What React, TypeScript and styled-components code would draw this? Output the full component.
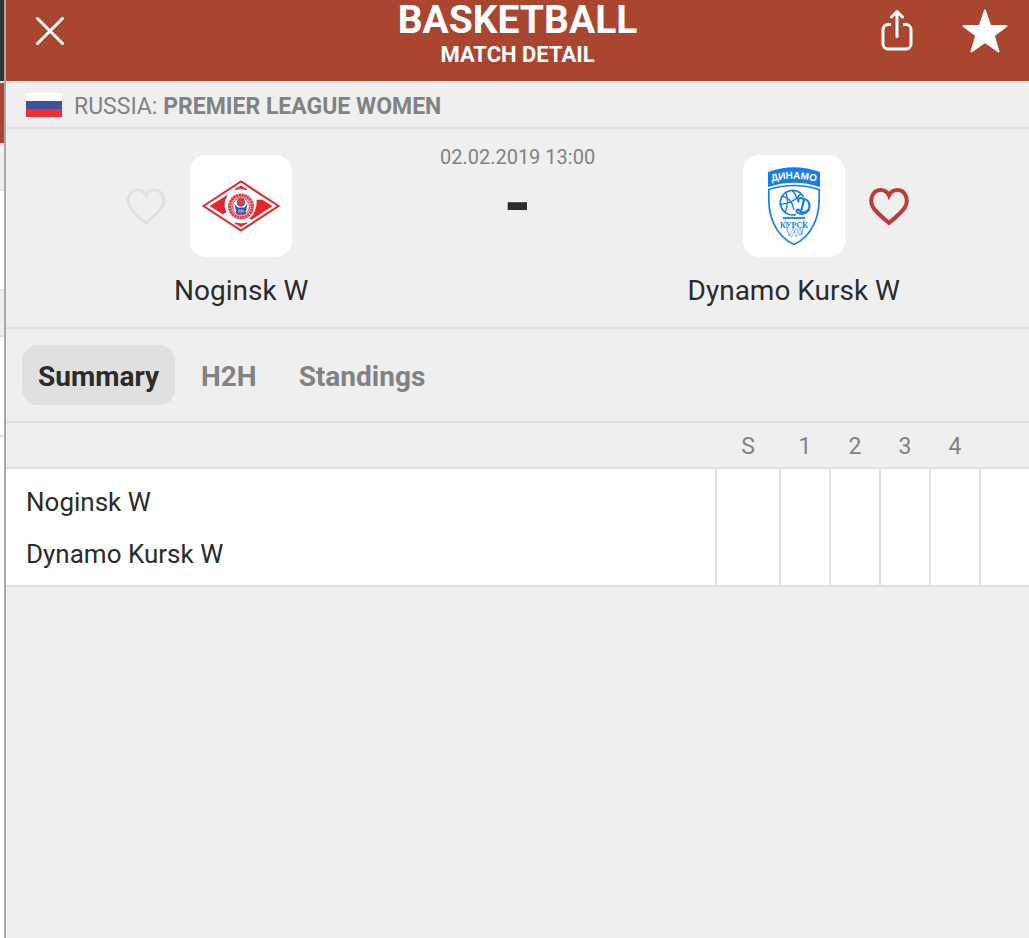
import React from "react";
import styled, { createGlobalStyle } from "styled-components";

const line = "#e0e0e0";
const surface = "#efefef";
const brand = "#aa4630";
const ink = "#2b2b2b";
const muted = "#828282";

const GlobalStyle = createGlobalStyle`
  * { box-sizing: border-box; }
  body {
    margin: 0;
    background: ${surface};
    color: ${ink};
    font-family: Roboto, "Liberation Sans", sans-serif;
  }
`;

const Screen = styled.div`
  display: flex;
  min-height: 100vh;
`;

const Backdrop = styled.div`
  width: 4px;
  flex: none;
  display: flex;
  flex-direction: column;
  background: #fff;
`;

const Strip = styled.div<{ $h: number; $bg: string }>`
  height: ${(p) => p.$h}px;
  background: ${(p) => p.$bg};
  border-bottom: 2px solid ${line};
`;

const Panel = styled.main`
  flex: 1;
  min-width: 0;
  border-left: 2px solid #a9a9a9;
  background: ${surface};
`;

const Header = styled.header`
  display: grid;
  grid-template-columns: 1fr auto 1fr;
  height: 83px;
  background: ${brand};
  border-bottom: 2px solid #f1dfdb;
  color: #fff;
`;

const Actions = styled.div<{ $end?: boolean }>`
  display: flex;
  justify-content: ${(p) => (p.$end ? "flex-end" : "flex-start")};
  align-items: flex-start;
  gap: 44px;
  padding: 8px 20px 0;
`;

const IconButton = styled.button`
  display: flex;
  padding: 0;
  border: 0;
  background: none;
  color: inherit;
  cursor: pointer;
`;

const Titles = styled.div`
  text-align: center;
`;

const Title = styled.h1`
  margin: 0;
  font-size: 39px;
  line-height: 40px;
  font-weight: 700;
`;

const Subtitle = styled.p`
  margin: 0;
  font-size: 22px;
  line-height: 30px;
  font-weight: 700;
`;

const League = styled.div`
  display: flex;
  align-items: center;
  gap: 12px;
  height: 46px;
  padding: 0 20px;
  border-bottom: 2px solid ${line};
  color: ${muted};
  font-size: 23px;
  line-height: 28px;
`;

const LeagueName = styled.span`
  padding-top: 4px;
`;

const Match = styled.section`
  display: grid;
  grid-template-columns: 1fr 154px 1fr;
  height: 200px;
  padding: 26px 36px 0;
  border-bottom: 2px solid ${line};
`;

const Team = styled.div`
  display: flex;
  flex-direction: column;
  align-items: center;
  gap: 16px;
`;

const CrestRow = styled.div<{ $mirrored?: boolean }>`
  display: flex;
  flex-direction: ${(p) => (p.$mirrored ? "row-reverse" : "row")};
  align-items: center;
  gap: 24px;
  &::after {
    content: "";
    width: 40px;
  }
`;

const Crest = styled.div`
  width: 102px;
  height: 102px;
  border-radius: 16px;
  background: #fff;
`;

const TeamName = styled.h2`
  margin: 0;
  font-size: 28px;
  line-height: 36px;
  font-weight: 400;
  white-space: nowrap;
`;

const Kickoff = styled.div`
  display: flex;
  flex-direction: column;
  align-items: center;
  margin-top: -12px;
`;

const KickoffTime = styled.time`
  color: ${muted};
  font-size: 20px;
  line-height: 28px;
  white-space: nowrap;
`;

const Score = styled.strong`
  font-size: 70px;
  line-height: 66px;
`;

const Tabs = styled.nav`
  display: flex;
  align-items: flex-start;
  gap: 10px;
  height: 94px;
  padding: 16px;
  border-bottom: 2px solid ${line};
`;

const Tab = styled.button<{ $active?: boolean }>`
  height: 60px;
  padding: 4px 16px 0;
  border: 0;
  border-radius: 16px;
  background: ${(p) => (p.$active ? line : "transparent")};
  color: ${(p) => (p.$active ? ink : muted)};
  font-family: inherit;
  font-size: 28px;
  line-height: 34px;
  font-weight: 700;
  cursor: pointer;
`;

const ScoreTable = styled.table`
  width: 100%;
  table-layout: fixed;
  border-collapse: separate;
  border-spacing: 0;
  border-bottom: 2px solid ${line};
`;

const PeriodHead = styled.th<{ $w?: number }>`
  width: ${(p) => (p.$w ? `${p.$w}px` : "auto")};
  height: 46px;
  padding: 4px 0 0 2px;
  border-bottom: 2px solid ${line};
  color: ${muted};
  font-size: 23px;
  line-height: 28px;
  font-weight: 400;
`;

const ScoreRow = styled.tr`
  background: #fff;
`;

const RowName = styled.th`
  padding: 0 20px;
  font-size: 26px;
  line-height: 52px;
  font-weight: 400;
  text-align: left;
  ${ScoreRow}:first-child & { padding-top: 7px; }
  ${ScoreRow}:last-child & { padding-bottom: 5px; }
`;

const ScoreCell = styled.td`
  padding: 0;
  border-left: 2px solid ${line};
`;

const periods = [
  { label: "S", width: 64 },
  { label: "1", width: 50 },
  { label: "2", width: 50 },
  { label: "3", width: 50 },
  { label: "4", width: 50 },
  { label: "", width: 50 },
];

const CloseIcon = () => (
  <svg width="48" height="46" viewBox="0 0 48 46" fill="none" stroke="currentColor" strokeWidth="3" strokeLinecap="round" aria-hidden="true">
    <path d="M11.500 10.500L36.500 35.500M36.500 10.500L11.500 35.500" />
  </svg>
);

const ShareIcon = () => (
  <svg width="40" height="46" viewBox="0 0 40 46" fill="none" stroke="currentColor" strokeWidth="3" strokeLinecap="round" strokeLinejoin="round" aria-hidden="true">
    <path strokeLinecap="butt" d="M14 16.500H11a5 5 0 0 0-5 5V36a5 5 0 0 0 5 5h18a5 5 0 0 0 5-5V21.500a5 5 0 0 0-5-5h-3" />
    <path d="M20 28.500V4M14.500 9l5.500-5.500 5.500 5.500" />
  </svg>
);

const StarIcon = () => (
  <svg width="48" height="46" viewBox="0 0 48 46" fill="currentColor" stroke="currentColor" strokeWidth="2" strokeLinejoin="round" aria-hidden="true">
    <path d="M24 2.500L29.300 18H45.500L32.800 27.500L37.500 43.500L24 34L10.500 43.500L15.200 27.500L2.500 18H18.700Z" />
  </svg>
);

const Heart = ({ color, weight }: { color: string; weight: number }) => (
  <svg width="40" height="40" viewBox="0 0 40 40" fill="none" stroke={color} strokeWidth={weight} strokeLinejoin="miter" aria-hidden="true">
    <path d="M20 37C14 32 8 27 4.500 22C-0.500 14.500 3.500 4 11.500 4C15.500 4 18.500 6 20 9.500C21.500 6 24.500 4 28.500 4C36.500 4 40.500 14.500 35.500 22C32 27 26 32 20 37Z" />
  </svg>
);

const RussiaFlag = () => (
  <svg width="36" height="24" viewBox="0 0 36 24" role="img" aria-label="Russia">
    <path fill="#fff" d="M0 0h36v8H0z" />
    <path fill="#3d51a5" d="M0 8h36v8H0z" />
    <path fill="#ee2f33" d="M0 16h36v8H0z" />
  </svg>
);

const NoginskCrest = () => (
  <svg width="102" height="102" viewBox="0 0 102 102" role="img" aria-label="Noginsk W">
    <path d="M13.500 51L51 26.500L88.500 51L51 75.500Z" fill="#fff" stroke="#e5262b" strokeWidth="2" />
    <path d="M19.500 51L38 39.500C34 46 33.500 52 36.500 57L33 59.500Z" fill="#e5262b" />
    <path d="M82.500 51L72 44.500L66.500 45C67.500 52 64 59 58.500 63.500L62 64.500Z" fill="#e5262b" />
    <path d="M45 34.500L51 31L57 34.500Q51 32.500 45 34.500ZM45 68L51 71.500L57 68Q51 70 45 68Z" fill="#e5262b" stroke="#e5262b" />
    <circle cx="51" cy="51.500" r="14.500" fill="#fff" />
    <circle cx="51" cy="51.500" r="11.200" fill="none" stroke="#f0a4ab" strokeWidth="4" />
    <circle cx="51" cy="51.500" r="11.200" fill="none" stroke="#e0384a" strokeWidth="3" strokeDasharray="2 0.800" />
    <circle cx="51" cy="51.500" r="8.500" fill="#fff" stroke="#d8303a" />
    <path d="M44.500 48.500L46.500 58.500Q51 60.500 55.500 58.500L57.500 48.500L54.500 52.500H47.500Z" fill="#2f4aa8" />
    <path d="M49 54v4M51 54v4.500M53 54v4M47.500 56h7" stroke="#c9d0ea" strokeWidth="0.700" />
    <circle cx="51" cy="47.500" r="3.700" fill="#dc4436" stroke="#33458f" strokeWidth="0.800" />
  </svg>
);

const DynamoCrest = () => (
  <svg width="102" height="102" viewBox="0 0 102 102" role="img" aria-label="Dynamo Kursk W">
    <defs>
      <path id="banner" d="M26 27.500Q51 20 76 27.500" />
    </defs>
    <path d="M25 17Q51 7.500 77 17V32Q51 23.500 25 32Z" fill="#147fe8" />
    <text fill="#fff" fontFamily="Liberation Sans, sans-serif" fontSize="10" fontWeight="700" textAnchor="middle">
      <textPath href="#banner" startOffset="50%">ДИНАМО</textPath>
    </text>
    <path d="M25.800 34.500Q51 26.500 76.200 34.500V45C76 66 66 83 51 89.500C36 83 26 66 25.800 45Z" fill="#fff" stroke="#147fe8" strokeWidth="1.700" />
    <g fill="none" stroke="#147fe8" strokeWidth="1.300">
      <path d="M60.500 42A12.300 12.300 0 1 0 53 59.500" strokeWidth="1.600" />
      <path d="M36.500 49Q49 50 58 38.500M42.500 36.500Q46.500 47 42 58M49 35.500Q53 39 53.500 43M38.500 41Q49 43 51 55" />
      <path d="M40 63H62" strokeWidth="1.800" />
      <path d="M42 64L46 81L50.500 73L53 82L57 73L59 80L61 64M43 74L48.500 82L53.500 73L57 81L60 74" strokeWidth="0.800" opacity="0.600" />
      <path d="M56 47C53 43.500 57 42.500 60 43.500C68 45 68 54 63 57.500C60 59.500 56 59 54 57C52.500 55 55.500 53.500 57.500 56C60 59 64 57 66.500 54M61 44.500L58.500 55" strokeWidth="2.200" />
    </g>
    <text x="51" y="73" fill="#147fe8" fontFamily="Liberation Serif, serif" fontSize="8" fontWeight="700" textAnchor="middle">КУРСК</text>
  </svg>
);

export default function App() {
  return (
    <>
      <GlobalStyle />
      <Screen>
        <Backdrop aria-hidden="true">
          <Strip $h={83} $bg="#333" />
          <Strip $h={62} $bg={brand} />
          <Strip $h={46} $bg={surface} />
          <Strip $h={100} $bg="#fff" />
          <Strip $h={46} $bg={surface} />
          <Strip $h={100} $bg="#fff" />
        </Backdrop>
        <Panel>
          <Header>
            <Actions>
              <IconButton aria-label="Close"><CloseIcon /></IconButton>
            </Actions>
            <Titles>
              <Title>BASKETBALL</Title>
              <Subtitle>MATCH DETAIL</Subtitle>
            </Titles>
            <Actions $end>
              <IconButton aria-label="Share"><ShareIcon /></IconButton>
              <IconButton aria-label="Favourite match"><StarIcon /></IconButton>
            </Actions>
          </Header>
          <League>
            <RussiaFlag />
            <LeagueName>RUSSIA: <b>PREMIER LEAGUE WOMEN</b></LeagueName>
          </League>
          <Match>
            <Team>
              <CrestRow>
                <IconButton aria-label="Follow Noginsk W"><Heart color="#e0e0e0" weight={3} /></IconButton>
                <Crest><NoginskCrest /></Crest>
              </CrestRow>
              <TeamName>Noginsk W</TeamName>
            </Team>
            <Kickoff>
              <KickoffTime dateTime="2019-02-02T13:00">02.02.2019 13:00</KickoffTime>
              <Score>-</Score>
            </Kickoff>
            <Team>
              <CrestRow $mirrored>
                <IconButton aria-label="Unfollow Dynamo Kursk W"><Heart color="#c03a3d" weight={4} /></IconButton>
                <Crest><DynamoCrest /></Crest>
              </CrestRow>
              <TeamName>Dynamo Kursk W</TeamName>
            </Team>
          </Match>
          <Tabs>
            <Tab $active>Summary</Tab>
            <Tab>H2H</Tab>
            <Tab>Standings</Tab>
          </Tabs>
          <ScoreTable>
            <thead>
              <tr>
                <PeriodHead as="td" />
                {periods.map((p, i) => (
                  <PeriodHead key={i} $w={p.width} scope="col">{p.label}</PeriodHead>
                ))}
              </tr>
            </thead>
            <tbody>
              {["Noginsk W", "Dynamo Kursk W"].map((name) => (
                <ScoreRow key={name}>
                  <RowName scope="row">{name}</RowName>
                  {periods.map((_, i) => <ScoreCell key={i} />)}
                </ScoreRow>
              ))}
            </tbody>
          </ScoreTable>
        </Panel>
      </Screen>
    </>
  );
}
